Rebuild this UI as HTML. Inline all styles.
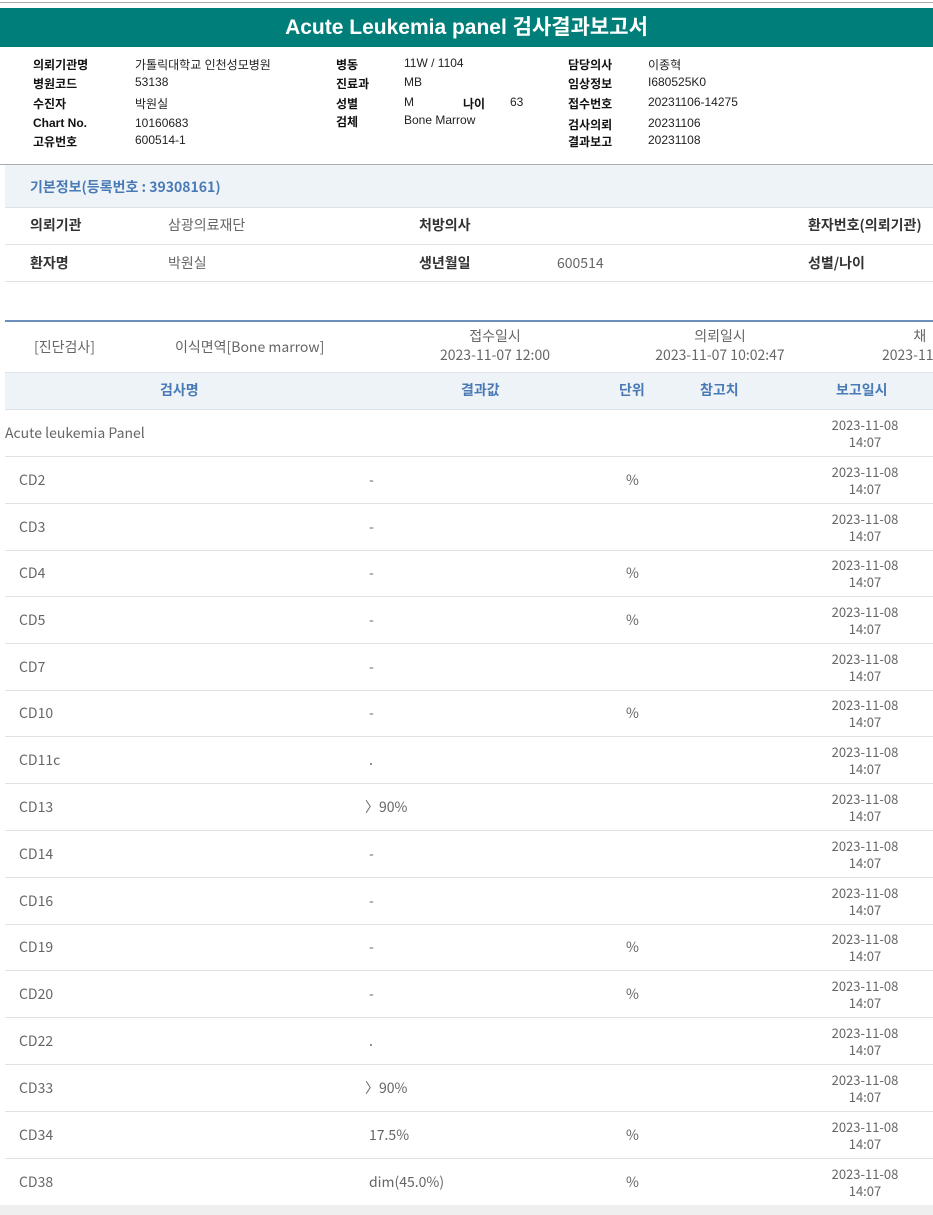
<!DOCTYPE html>
<html><head><meta charset="utf-8">
<style>
*{margin:0;padding:0;box-sizing:border-box}
body{width:933px;height:1215px;background:#fff;position:relative;overflow:hidden;font-family:"Liberation Sans","Noto Sans CJK KR",sans-serif;color:#555}
.a{position:absolute;white-space:nowrap}
.hl{font-size:12px;color:#111;font-weight:bold}
.hv{font-size:12px;color:#222}
.n{font-family:"Noto Sans CJK KR",sans-serif;line-height:20px}
.b{font-size:14px;color:#333;font-weight:bold;font-family:"Noto Sans CJK KR",sans-serif;line-height:20px}
.g{font-size:14px;color:#666;font-family:"Noto Sans CJK KR",sans-serif;line-height:20px}
.line{position:absolute;left:5px;right:0;height:1px;background:#dde3ea}
.row{position:absolute;left:5px;right:0;height:47px;border-bottom:1px solid #e2e2e2;font-size:14px;color:#666;font-family:"Noto Sans CJK KR",sans-serif}
.row span{position:absolute;top:13px;line-height:20px}
.row .d{left:810px;width:100px;text-align:center;top:6px;line-height:17px;font-size:13px}
.th{position:absolute;top:380px;font-size:14px;font-weight:bold;color:#4a7ab5;font-family:"Noto Sans CJK KR",sans-serif;line-height:20px}
</style></head><body>
<div class="a" style="left:0;top:2px;width:933px;height:1px;background:#aaa"></div>
<div class="a" style="left:0;top:8px;width:933px;height:39px;background:#007f7a;color:#fff;font-weight:bold;font-size:21px;text-align:center;line-height:39px">Acute Leukemia panel 검사결과보고서</div>
<div class="a" style="left:0;top:164px;width:933px;height:1px;background:#aaa"></div>
<div class="a hl" style="left:33px;top:56px">의뢰기관명</div><div class="a hv" style="left:135px;top:56px">가톨릭대학교 인천성모병원</div>
<div class="a hl" style="left:33px;top:75px">병원코드</div><div class="a hv" style="left:135px;top:75px">53138</div>
<div class="a hl" style="left:33px;top:95px">수진자</div><div class="a hv" style="left:135px;top:95px">박원실</div>
<div class="a hl" style="left:33px;top:116px">Chart No.</div><div class="a hv" style="left:135px;top:116px">10160683</div>
<div class="a hl" style="left:33px;top:133px">고유번호</div><div class="a hv" style="left:135px;top:133px">600514-1</div>
<div class="a hl" style="left:336px;top:56px">병동</div><div class="a hv" style="left:404px;top:56px">11W / 1104</div>
<div class="a hl" style="left:336px;top:75px">진료과</div><div class="a hv" style="left:404px;top:75px">MB</div>
<div class="a hl" style="left:336px;top:95px">성별</div><div class="a hv" style="left:404px;top:95px">M</div>
<div class="a hl" style="left:463px;top:95px">나이</div><div class="a hv" style="left:510px;top:95px">63</div>
<div class="a hl" style="left:336px;top:113px">검체</div><div class="a hv" style="left:404px;top:113px">Bone Marrow</div>
<div class="a hl" style="left:568px;top:56px">담당의사</div><div class="a hv" style="left:648px;top:56px">이종혁</div>
<div class="a hl" style="left:568px;top:75px">임상정보</div><div class="a hv" style="left:648px;top:75px">I680525K0</div>
<div class="a hl" style="left:568px;top:95px">접수번호</div><div class="a hv" style="left:648px;top:95px">20231106-14275</div>
<div class="a hl" style="left:568px;top:116px">검사의뢰</div><div class="a hv" style="left:648px;top:116px">20231106</div>
<div class="a hl" style="left:568px;top:133px">결과보고</div><div class="a hv" style="left:648px;top:133px">20231108</div>

<div class="a" style="left:5px;top:165px;width:928px;height:43px;background:#eef3f8"></div>
<div class="a n" style="left:30px;top:177px;font-size:14px;font-weight:bold;color:#4a7ab5">기본정보(등록번호 : 39308161)</div>
<div class="line" style="top:207px"></div>
<div class="a b" style="left:30px;top:215px">의뢰기관</div><div class="a g" style="left:168px;top:215px">삼광의료재단</div>
<div class="a b" style="left:419px;top:215px">처방의사</div><div class="a b" style="left:808px;top:215px">환자번호(의뢰기관)</div>
<div class="line" style="top:244px;background:#e2e2e2"></div>
<div class="a b" style="left:30px;top:253px">환자명</div><div class="a g" style="left:168px;top:253px">박원실</div>
<div class="a b" style="left:419px;top:253px">생년월일</div><div class="a g" style="left:557px;top:253px">600514</div>
<div class="a b" style="left:808px;top:253px">성별/나이</div>
<div class="line" style="top:281px;background:#e2e2e2"></div>

<div class="a" style="left:5px;top:320px;width:928px;height:2px;background:#6b8fb8"></div>
<div class="a g" style="left:34px;top:337px">[진단검사]</div>
<div class="a g" style="left:175px;top:337px">이식면역[Bone marrow]</div>
<div class="a g" style="left:405px;top:327px;width:180px;text-align:center;line-height:19px">접수일시<br>2023-11-07 12:00</div>
<div class="a g" style="left:620px;top:327px;width:200px;text-align:center;line-height:19px">의뢰일시<br>2023-11-07 10:02:47</div>
<div class="a g" style="left:882px;top:327px;line-height:19px">&nbsp;&nbsp;&nbsp;&nbsp;&nbsp;&nbsp;&nbsp;&nbsp;&nbsp;&nbsp;채<br>2023-11</div>
<div class="a" style="left:5px;top:372px;width:928px;height:38px;background:#eef3f8;border-top:1px solid #dde3ea;border-bottom:1px solid #dde3ea"></div>
<div class="th" style="left:160px">검사명</div>
<div class="th" style="left:461px">결과값</div>
<div class="th" style="left:619px">단위</div>
<div class="th" style="left:700px">참고치</div>
<div class="th" style="left:836px">보고일시</div>

<div class="row" style="top:410px"><span style="left:0">Acute leukemia Panel</span><span class="d">2023-11-08<br>14:07</span></div>
<div class="row" style="top:457px"><span style="left:14px">CD2</span><span style="left:364px">-</span><span style="left:621px">%</span><span class="d">2023-11-08<br>14:07</span></div>
<div class="row" style="top:504px"><span style="left:14px">CD3</span><span style="left:364px">-</span><span class="d">2023-11-08<br>14:07</span></div>
<div class="row" style="top:550px"><span style="left:14px">CD4</span><span style="left:364px">-</span><span style="left:621px">%</span><span class="d">2023-11-08<br>14:07</span></div>
<div class="row" style="top:597px"><span style="left:14px">CD5</span><span style="left:364px">-</span><span style="left:621px">%</span><span class="d">2023-11-08<br>14:07</span></div>
<div class="row" style="top:644px"><span style="left:14px">CD7</span><span style="left:364px">-</span><span class="d">2023-11-08<br>14:07</span></div>
<div class="row" style="top:690px"><span style="left:14px">CD10</span><span style="left:364px">-</span><span style="left:621px">%</span><span class="d">2023-11-08<br>14:07</span></div>
<div class="row" style="top:737px"><span style="left:14px">CD11c</span><span style="left:364px">.</span><span class="d">2023-11-08<br>14:07</span></div>
<div class="row" style="top:784px"><span style="left:14px">CD13</span><span style="left:360px">〉90%</span><span class="d">2023-11-08<br>14:07</span></div>
<div class="row" style="top:831px"><span style="left:14px">CD14</span><span style="left:364px">-</span><span class="d">2023-11-08<br>14:07</span></div>
<div class="row" style="top:878px"><span style="left:14px">CD16</span><span style="left:364px">-</span><span class="d">2023-11-08<br>14:07</span></div>
<div class="row" style="top:924px"><span style="left:14px">CD19</span><span style="left:364px">-</span><span style="left:621px">%</span><span class="d">2023-11-08<br>14:07</span></div>
<div class="row" style="top:971px"><span style="left:14px">CD20</span><span style="left:364px">-</span><span style="left:621px">%</span><span class="d">2023-11-08<br>14:07</span></div>
<div class="row" style="top:1018px"><span style="left:14px">CD22</span><span style="left:364px">.</span><span class="d">2023-11-08<br>14:07</span></div>
<div class="row" style="top:1065px"><span style="left:14px">CD33</span><span style="left:360px">〉90%</span><span class="d">2023-11-08<br>14:07</span></div>
<div class="row" style="top:1112px"><span style="left:14px">CD34</span><span style="left:364px">17.5%</span><span style="left:621px">%</span><span class="d">2023-11-08<br>14:07</span></div>
<div class="row" style="top:1159px;border-bottom:none"><span style="left:14px">CD38</span><span style="left:364px">dim(45.0%)</span><span style="left:621px">%</span><span class="d">2023-11-08<br>14:07</span></div>
<div class="a" style="left:0;top:1205px;width:933px;height:10px;background:#efefef"></div>
</body></html>
